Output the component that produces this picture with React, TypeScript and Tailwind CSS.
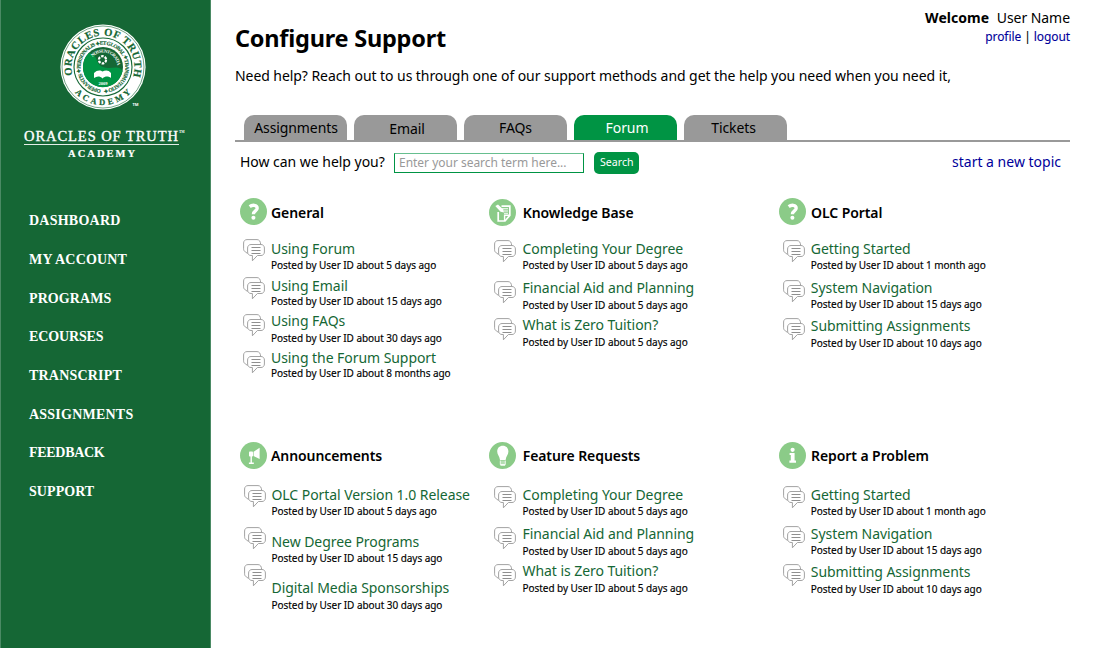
import type { ReactNode } from 'react';

type Post = { title: string; meta: string; gap: string; metaGap: string };
type Section = {
  title: string;
  icon: ReactNode;
  headGap: string;
  iconTop: string;
  textLeft: string;
  bubbleLeft: string;
  bubbles: string[];
  posts: Post[];
};

const posted = (when: string) => `Posted by User ID about ${when} ago`;

function Disc({ children }: { children: ReactNode }) {
  return (
    <svg className="block h-[27px] w-[27px]" viewBox="0 0 27 27">
      <circle cx="13.5" cy="13.5" r="13.5" fill="#8bcb88" />
      {children}
    </svg>
  );
}

const QuestionIcon = () => (
  <Disc>
    <path
      d="M9.7 8.6 C12.2 6.6 17.2 6.6 17.2 10.2 C17.2 13 13.4 12.8 13.4 16.2"
      fill="none"
      stroke="#fff"
      strokeWidth="3.3"
    />
    <circle cx="13.4" cy="19.8" r="2" fill="#fff" />
  </Disc>
);

const NoteIcon = () => (
  <Disc>
    <path d="M12.5 7.2 H20.8 V16.4 L16 22 H9.2 V13" fill="none" stroke="#fff" strokeWidth="1.7" />
    <path d="M20.8 16.2 H15.6 V22" fill="none" stroke="#fff" strokeWidth="1.4" />
    <path d="M13 9.7 H19 M14.5 12 H19 M15 14.2 H19" stroke="#fff" strokeWidth="1.1" />
    <path d="M6.3 7 L9 5.4 L14.3 10.4 L15 13.6 L11.6 12.8 Z" fill="#fff" />
  </Disc>
);

const HornIcon = () => (
  <Disc>
    <path d="M13.6 9.8 L19.6 5.8 V17 L13.6 14 Z" fill="#fff" />
    <rect x="9" y="9.6" width="4" height="5" rx="0.8" fill="#fff" />
    <path d="M11.2 14 V21 M8.9 21.2 H13.8" stroke="#fff" strokeWidth="1.4" />
  </Disc>
);

const BulbIcon = () => (
  <Disc>
    <path
      d="M13.8 3.8 C17.2 3.8 19.4 6.2 19.4 9.4 C19.4 12.6 17 14.2 16.6 18 H11 C10.6 14.2 8.2 12.6 8.2 9.4 C8.2 6.2 10.4 3.8 13.8 3.8 Z"
      fill="#fff"
    />
    <path d="M11.3 18.5 V22.6 H16.3 V18.5" fill="#b5deb3" stroke="#fff" strokeWidth="0.8" />
    <path d="M11.5 23 H16.1" stroke="#fff" strokeWidth="1.4" />
  </Disc>
);

const InfoIcon = () => (
  <Disc>
    <circle cx="13.6" cy="7.8" r="2.1" fill="#fff" />
    <path d="M10.6 11 H15.6 V18.6 H17 V20.8 H10.4 V18.6 H11.8 V13 H10.6 Z" fill="#fff" />
  </Disc>
);

const Bubble = ({ className }: { className: string }) => (
  <svg className={`block h-[23px] w-[22px] shrink-0 ${className}`} viewBox="0 0 22 23" fill="none" stroke="#a3a3a3">
    <path d="M4.5 14.5 L2.6 13 C1.2 12.4 0.6 11.2 0.6 9.8 V4 C0.6 2 2 0.6 4 0.6 H14 C16.2 0.6 17.6 2.4 17.6 5.4" />
    <path d="M8 5.5 H18 C20 5.5 21.4 7 21.4 9 V13 C21.4 15 20 16.5 18 16.5 H14.4 L9.4 21.8 V16.5 H8 C6 16.5 4.6 15 4.6 13 V9 C4.6 7 6 5.5 8 5.5 Z" />
    <path d="M8.5 8.5 H17.5 M8.5 11.5 H17.5 M8.5 14.5 H17.5" stroke="#8f8f8f" />
  </svg>
);

const top: Section[] = [
  {
    title: 'General',
    icon: <QuestionIcon />,
    headGap: 'mt-[5px] ml-[4px]',
    iconTop: 'mt-0',
    textLeft: 'ml-[6.5px]',
    bubbleLeft: 'ml-[2.5px]',
    bubbles: ['mt-0', 'mt-[15px]', 'mt-[14px]', 'mt-[14px]'],
    posts: [
      { title: 'Using Forum', meta: posted('5 days'), gap: 'mt-0', metaGap: '-mt-px' },
      { title: 'Using Email', meta: posted('15 days'), gap: 'mt-[3px]', metaGap: '-mt-[2px]' },
      { title: 'Using FAQs', meta: posted('30 days'), gap: 'mt-[2px]', metaGap: 'mt-0' },
      { title: 'Using the Forum Support', meta: posted('8 months'), gap: 'mt-[2px]', metaGap: '-mt-[2px]' },
    ],
  },
  {
    title: 'Knowledge Base',
    icon: <NoteIcon />,
    headGap: 'mt-[5px] ml-[6.7px]',
    iconTop: 'mt-px',
    textLeft: 'ml-[7px]',
    bubbleLeft: 'ml-[4.5px]',
    bubbles: ['mt-px', 'mt-[18px]', 'mt-[14px]'],
    posts: [
      { title: 'Completing Your Degree', meta: posted('5 days'), gap: 'mt-0', metaGap: '-mt-px' },
      { title: 'Financial Aid and Planning', meta: posted('5 days'), gap: 'mt-[5px]', metaGap: 'mt-0' },
      { title: 'What is Zero Tuition?', meta: posted('5 days'), gap: 'mt-[2px]', metaGap: 'mt-0' },
    ],
  },
  {
    title: 'OLC Portal',
    icon: <QuestionIcon />,
    headGap: 'mt-[5px] ml-[5px]',
    iconTop: 'mt-0',
    textLeft: 'ml-[6.3px]',
    bubbleLeft: 'ml-[3.5px]',
    bubbles: ['mt-px', 'mt-[17px]', 'mt-[15px]'],
    posts: [
      { title: 'Getting Started', meta: posted('1 month'), gap: 'mt-0', metaGap: '-mt-px' },
      { title: 'System Navigation', meta: posted('15 days'), gap: 'mt-[5px]', metaGap: '-mt-px' },
      { title: 'Submitting Assignments', meta: posted('10 days'), gap: 'mt-[4px]', metaGap: 'mt-0' },
    ],
  },
];

const bottom: Section[] = [
  {
    title: 'Announcements',
    icon: <HornIcon />,
    headGap: 'mt-[4px] ml-[4px]',
    iconTop: 'mt-0',
    textLeft: 'ml-[6px]',
    bubbleLeft: 'ml-[3.5px]',
    bubbles: ['mt-0', 'mt-[19px]', 'mt-[14px]'],
    posts: [
      { title: 'OLC Portal Version 1.0 Release', meta: posted('5 days'), gap: 'mt-0', metaGap: '-mt-px' },
      { title: 'New Degree Programs', meta: posted('15 days'), gap: 'mt-[13px]', metaGap: '-mt-px' },
      { title: 'Digital Media Sponsorships', meta: posted('30 days'), gap: 'mt-[12px]', metaGap: 'mt-0' },
    ],
  },
  {
    title: 'Feature Requests',
    icon: <BulbIcon />,
    headGap: 'mt-[4px] ml-[6.7px]',
    iconTop: 'mt-0',
    textLeft: 'ml-[7px]',
    bubbleLeft: 'ml-[4.5px]',
    bubbles: ['mt-px', 'mt-[18px]', 'mt-[14px]'],
    posts: [
      { title: 'Completing Your Degree', meta: posted('5 days'), gap: 'mt-0', metaGap: '-mt-px' },
      { title: 'Financial Aid and Planning', meta: posted('5 days'), gap: 'mt-[5px]', metaGap: 'mt-0' },
      { title: 'What is Zero Tuition?', meta: posted('5 days'), gap: 'mt-[2px]', metaGap: 'mt-0' },
    ],
  },
  {
    title: 'Report a Problem',
    icon: <InfoIcon />,
    headGap: 'mt-[4px] ml-[5px]',
    iconTop: 'mt-0',
    textLeft: 'ml-[6.3px]',
    bubbleLeft: 'ml-[3.5px]',
    bubbles: ['mt-px', 'mt-[17px]', 'mt-[15px]'],
    posts: [
      { title: 'Getting Started', meta: posted('1 month'), gap: 'mt-0', metaGap: '-mt-px' },
      { title: 'System Navigation', meta: posted('15 days'), gap: 'mt-[5px]', metaGap: '-mt-px' },
      { title: 'Submitting Assignments', meta: posted('10 days'), gap: 'mt-[4px]', metaGap: 'mt-0' },
    ],
  },
];

function ForumSection({ section, bodyGap }: { section: Section; bodyGap: string }) {
  return (
    <section>
      <div className="flex h-[28px] items-start">
        <div className={section.iconTop}>{section.icon}</div>
        <h2 className={`text-[14px] leading-[20px] font-semibold tracking-[-0.08px] text-black ${section.headGap}`}>
          {section.title}
        </h2>
      </div>
      <div className={`flex items-start ${bodyGap}`}>
        <div className={`flex flex-col ${section.bubbleLeft}`}>
          {section.bubbles.map((gap, i) => (
            <Bubble key={i} className={gap} />
          ))}
        </div>
        <ul className={section.textLeft}>
          {section.posts.map((post) => (
            <li key={post.title} className={`pb-px whitespace-nowrap ${post.gap}`}>
              <a className="block text-[14px] leading-[20px] tracking-[-0.06px] text-[#156735]">{post.title}</a>
              <p
                className={`text-[10px] leading-[14px] tracking-[-0.05px] text-black [-webkit-text-stroke:0.15px_black] ${post.metaGap}`}
              >
                {post.meta}
              </p>
            </li>
          ))}
        </ul>
      </div>
    </section>
  );
}

function Seal() {
  return (
    <svg className="ml-[58px] block h-[90px] w-[90px]" viewBox="-45 -45 90 90" fontFamily="'Liberation Serif', serif">
      <defs>
        <path id="ring-outer" d="M 0 31.5 A 31.5 31.5 0 0 1 0 -31.5 A 31.5 31.5 0 0 1 0 31.5" />
        <path id="ring-bottom" d="M -38 0 A 38 38 0 0 0 38 0" />
        <path id="ring-motto" d="M 0 22.4 A 22.4 22.4 0 0 1 0 -22.4 A 22.4 22.4 0 0 1 0 22.4" />
        <path id="ring-inner" d="M -10.5 -10 A 14.5 14.5 0 0 1 14.3 2.5" />
      </defs>
      <circle r="42.6" fill="#fff" />
      <circle r="41" fill="none" stroke="#156735" strokeWidth="0.6" />
      <circle r="29" fill="none" stroke="#156735" strokeWidth="1.1" />
      <circle r="20" fill="#156735" />
      <path d="M-14.1 -14.1 A20 20 0 1 0 19.5 4 C16 -3 8 3 0 0 C-8 -3 -4 -12 -14.1 -14.1 Z" fill="#009444" />
      <text fontSize="10.6" fontWeight="700" fill="#156735" stroke="#156735" strokeWidth="0.2">
        <textPath href="#ring-outer" startOffset="41" textLength="117">ORACLES OF TRUTH</textPath>
      </text>
      <text fontSize="8.6" fontWeight="700" fill="#156735" stroke="#156735" strokeWidth="0.2">
        <textPath href="#ring-bottom" startOffset="28" textLength="63">ACADEMY</textPath>
      </text>
      <text fontSize="5.4" fontWeight="700" fill="#156735" stroke="#156735" strokeWidth="0.15">
        <textPath href="#ring-motto" startOffset="2" textLength="137">OPERANTIS ✦ PERSONALIS ✦ ET GLOBAL ✦ TRANSMUTATIO ✦</textPath>
      </text>
      <text fontSize="4.6" fontWeight="700" fill="#fff">
        <textPath href="#ring-inner" textLength="33">NOS SUNT GRATIA</textPath>
      </text>
      <circle cx="-0.5" cy="-7.2" r="3.6" fill="none" stroke="#fff" strokeWidth="2.2" strokeDasharray="2.6 1.17" />
      <path d="M-9 11 V6 C-6 2.6 -2 3 -0.5 4.6 C2 3 5.5 2.6 8 6 V11 C5.5 8.8 2 9 -0.5 11.4 C-3 9 -6 8.8 -9 11 Z" fill="#fff" />
      <text y="17.5" fontSize="4.6" fontWeight="700" fill="#fff" textAnchor="middle">2009</text>
      <text x="29.5" y="38.5" fontSize="4" fontWeight="700" fill="#fff" fontFamily="'Noto Sans', sans-serif">TM</text>
    </svg>
  );
}

const nav: [string, string][] = [
  ['DASHBOARD', 'h-[39px] tracking-[0.24px]'],
  ['MY ACCOUNT', 'h-[39px] tracking-[0.18px]'],
  ['PROGRAMS', 'h-[38px] tracking-[0.08px]'],
  ['ECOURSES', 'h-[39px] tracking-[-0.12px]'],
  ['TRANSCRIPT', 'h-[39px] tracking-[0.2px]'],
  ['ASSIGNMENTS', 'h-[38px] tracking-[0.23px]'],
  ['FEEDBACK', 'h-[39px] tracking-[-0.3px]'],
  ['SUPPORT', 'h-[39px] tracking-[0.06px]'],
];

const tabs: [string, string, string][] = [
  ['Assignments', 'bg-[#999999] text-black', 'pt-[3px] pl-px'],
  ['Email', 'bg-[#999999] text-black', 'pt-[4px] pl-[3px]'],
  ['FAQs', 'bg-[#999999] text-black', 'pt-[3px]'],
  ['Forum', 'bg-[#009444] text-white', 'pt-[3px] pl-[3px]'],
  ['Tickets', 'bg-[#999999] text-black', 'pt-[3px] pr-[4px]'],
];

export default function App() {
  return (
    <div className="flex h-[648px] w-[1097px] overflow-hidden bg-white font-['Noto_Sans',sans-serif] text-black">
      <aside className="w-[211px] shrink-0 border-x border-[#4a8a64] bg-[#156735] pt-[22px] font-['Liberation_Serif',serif] text-white">
        <div className="-ml-px">
          <Seal />
          <div className="flex">
            <div className="mt-[16px] ml-6 w-[155px] border-b border-[#e3ede6] text-[14.5px] leading-[16px] tracking-[0.94px] whitespace-nowrap [-webkit-text-stroke:0.35px_white]">
              ORACLES OF TRUTH
            </div>
            <span className="mt-[17px] text-[3.5px] leading-[6px] font-bold">TM</span>
          </div>
          <div className="mt-[3px] ml-[68px] text-[10.5px] leading-[12px] font-bold tracking-[2.05px] [-webkit-text-stroke:0.2px_white]">
            ACADEMY
          </div>
          <nav className="mt-[51px] ml-[29px] flex flex-col">
            {nav.map(([label, cls]) => (
              <a key={label} className={`text-[14px] leading-[20px] font-bold whitespace-nowrap ${cls}`}>
                {label}
              </a>
            ))}
          </nav>
        </div>
      </aside>

      <main className="flex-1 pl-6">
        <header className="flex h-[115px] w-[835px] justify-between">
          <div>
            <h1 className="mt-[22px] text-[23.5px] leading-[32px] font-bold tracking-[-0.23px]">Configure Support</h1>
            <p className="mt-[12px] text-[14px] leading-[20px] tracking-[-0.065px] whitespace-nowrap">
              Need help? Reach out to us through one of our support methods and get the help you need when you need it,
            </p>
          </div>
          <div className="-ml-40 mt-[8px] text-right">
            <p className="text-[14px] leading-[20px] tracking-[-0.05px]">
              <strong className="mr-[7.5px] font-bold tracking-[0.05px]">Welcome</strong>User Name
            </p>
            <p className="text-[12px] leading-[18px] tracking-[-0.08px] [-webkit-text-stroke:0.1px]">
              <a className="text-[#00009b]">profile</a> | <a className="text-[#00009b]">logout</a>
            </p>
          </div>
        </header>

        <div className="flex h-[27px] w-[835px] items-start gap-[7px] border-b-2 border-[#999999] pl-[9px]">
          {tabs.map(([label, color, pad]) => (
            <div
              key={label}
              className={`h-[25px] w-[103px] rounded-t-[10px] text-center text-[14px] leading-[20px] tracking-[-0.1px] ${color} ${pad}`}
            >
              {label}
            </div>
          ))}
        </div>

        <div className="flex h-[56px] w-[826px] items-start pl-[5px]">
          <label className="mt-[10px] w-[154px] text-[14px] leading-[20px] tracking-[-0.03px]">How can we help you?</label>
          <input
            className="mt-[11px] h-[20px] w-[190px] border border-[#009444] border-t-[#66bf8f] px-[4px] pb-px text-[12px] leading-[17px] tracking-[-0.02px] outline-none placeholder:text-[#999999] placeholder:opacity-100"
            placeholder="Enter your search term here..."
          />
          <button className="mt-[10px] ml-[10.3px] h-[22px] w-[45px] rounded-[5px] bg-[#009444] pb-[2px] text-[10.6px] leading-[18px] text-white">
            Search
          </button>
          <a className="mt-[10px] ml-auto text-[14px] leading-[20px] text-[#00009b]">start a new topic</a>
        </div>

        <div className="flex h-[244px] pl-[5px]">
          <div className="w-[249px]"><ForumSection section={top[0]} bodyGap="mt-[13px]" /></div>
          <div className="w-[290px]"><ForumSection section={top[1]} bodyGap="mt-[13px]" /></div>
          <div className="w-[290px]"><ForumSection section={top[2]} bodyGap="mt-[13px]" /></div>
        </div>
        <div className="flex pl-[5px]">
          <div className="w-[249px]"><ForumSection section={bottom[0]} bodyGap="mt-[15px]" /></div>
          <div className="w-[290px]"><ForumSection section={bottom[1]} bodyGap="mt-[15px]" /></div>
          <div className="w-[290px]"><ForumSection section={bottom[2]} bodyGap="mt-[15px]" /></div>
        </div>
      </main>
    </div>
  );
}
